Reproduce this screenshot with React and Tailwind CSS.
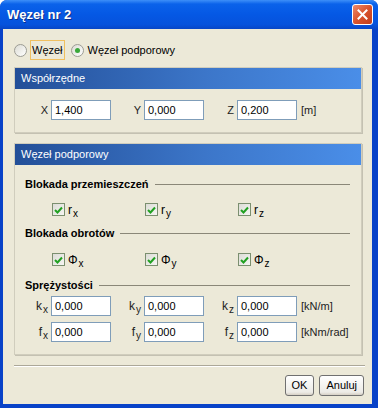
const font = { fontFamily: '"Liberation Sans", Arial, sans-serif' };

function Sub({ base, sub }) {
  return (
    <span className="inline-flex items-start leading-none h-[12px]">
      <span className="text-[12px]">{base}</span>
      <span className="text-[10px] relative top-[5px] ml-[1px]">{sub}</span>
    </span>
  );
}

function Input({ value }) {
  return (
    <div className="w-[60px] h-[20px] bg-white border border-[#7f9db9] flex items-center px-[3px] text-[11px] text-black">
      {value}
    </div>
  );
}

function Check() {
  return (
    <div className="w-[13px] h-[13px] border border-[#7b8f6f] bg-[linear-gradient(135deg,#dcdcd6,#f6f6f3)] flex items-center justify-center">
      <svg width="9" height="8" viewBox="0 0 9 8">
        <path d="M1 4 L3.5 6.5 L8 1.5" stroke="#21a121" strokeWidth="2" fill="none" />
      </svg>
    </div>
  );
}

function Panel({ title, children }) {
  return (
    <div className="mx-[11px] mr-[10px] border border-[#d0cdbd] shadow-[1px_1px_0_#c4c1b2] bg-[#ece9d8]">
      <div className="h-[21px] bg-[linear-gradient(90deg,#234f98,#3c76c9_55%,#4a8ee8)] flex items-center pl-[6px] text-white text-[11px]">
        {title}
      </div>
      {children}
    </div>
  );
}

function Section({ title, className }) {
  return (
    <div className={'flex items-center pl-[10px] pr-[11px] h-[14px] ' + className}>
      <span className="font-bold text-[11px] text-black whitespace-nowrap">{title}</span>
      <div className="flex-1 h-px bg-[#8a8778] ml-[6px]" />
    </div>
  );
}

function InputRow({ labels, values, unit, className }) {
  return (
    <div className={'flex items-center pl-[3px] h-[20px] ' + className}>
      {labels.map((l, i) => (
        <div key={i} className="w-[93px] flex items-center">
          <div className="w-[30px] flex justify-end text-[11px] text-[#222]">{l}</div>
          <div className="ml-[3px]">
            <Input value={values[i]} />
          </div>
        </div>
      ))}
      <span className="ml-[4px] text-[11px] text-[#222] whitespace-nowrap">{unit}</span>
    </div>
  );
}

function CheckRow({ base, className }) {
  return (
    <div className={'flex items-center pl-[3px] h-[13px] ' + className}>
      {['x', 'y', 'z'].map((s) => (
        <div key={s} className="w-[93px] flex items-center pl-[34px] gap-[3px]">
          <Check />
          <Sub base={base} sub={s} />
        </div>
      ))}
    </div>
  );
}

export default function App() {
  return (
    <div className="w-[378px] h-[408px] bg-white" style={font}>
      <div className="w-full h-full flex flex-col rounded-t-[7px] overflow-hidden bg-[#0842c8]">
        {/* Title bar */}
        <div className="h-[29px] shrink-0 flex items-center justify-between pl-[7px] pr-[5px] bg-[linear-gradient(180deg,#3d8ff8_0%,#0a62ea_14%,#0558e4_50%,#0652dc_85%,#0846c6_100%)]">
          <span className="text-white font-bold text-[13px] [text-shadow:1px_1px_0_#0b2f8a]">Węzeł nr 2</span>
          <div className="w-[21px] h-[21px] rounded-[3px] border border-white bg-[linear-gradient(135deg,#ee8a6c,#d9532d_50%,#c13d1c)] flex items-center justify-center">
            <svg width="11" height="11" viewBox="0 0 11 11">
              <path d="M1.5 1.5 L9.5 9.5 M9.5 1.5 L1.5 9.5" stroke="white" strokeWidth="2" strokeLinecap="square" />
            </svg>
          </div>
        </div>

        {/* Body */}
        <div className="flex-1 ml-[3px] mr-[6px] mb-[4px] bg-[#ece9d8] flex flex-col">
          <div className="h-[38px] flex items-center pl-[11px] pt-[4px] text-[11px] text-black">
            <div className="w-[13px] h-[13px] rounded-full border border-[#9c9c94] bg-[linear-gradient(135deg,#dcdcd4,#ffffff)]" />
            <span className="ml-[3px] px-[1px] py-[1px] border border-[#f0c060]">Węzeł</span>
            <div className="ml-[6px] w-[13px] h-[13px] rounded-full border border-[#9c9c94] bg-[linear-gradient(135deg,#dcdcd4,#ffffff)] flex items-center justify-center">
              <div className="w-[5px] h-[5px] rounded-full bg-[#3aa83a]" />
            </div>
            <span className="ml-[4px]">Węzeł podporowy</span>
          </div>

          <Panel title="Współrzędne">
            <InputRow
              labels={['X', 'Y', 'Z']}
              values={['1,400', '0,000', '0,200']}
              unit="[m]"
              className="mt-[11px] mb-[12px]"
            />
          </Panel>

          <div className="h-[10px]" />

          <Panel title="Węzeł podporowy">
            <Section title="Blokada przemieszczeń" className="mt-[12px]" />
            <CheckRow base="r" className="mt-[12px]" />
            <Section title="Blokada obrotów" className="mt-[10px]" />
            <CheckRow base="Φ" className="mt-[13px]" />
            <Section title="Sprężystości" className="mt-[12px]" />
            <InputRow
              labels={[<Sub base="k" sub="x" />, <Sub base="k" sub="y" />, <Sub base="k" sub="z" />]}
              values={['0,000', '0,000', '0,000']}
              unit="[kN/m]"
              className="mt-[4px]"
            />
            <InputRow
              labels={[<Sub base="f" sub="x" />, <Sub base="f" sub="y" />, <Sub base="f" sub="z" />]}
              values={['0,000', '0,000', '0,000']}
              unit="[kNm/rad]"
              className="mt-[6px] mb-[12px]"
            />
          </Panel>

          <div className="mt-[10px] ml-[11px] mr-[7px] border-t border-[#aca899] border-b border-b-white" />

          <div className="flex justify-end gap-[5px] pr-[8px] mt-[8px]">
            <div className="h-[21px] px-[6px] rounded-[3px] border border-[#707070] bg-[linear-gradient(180deg,#ffffff,#ecebe6_85%,#d6d0c5)] flex items-center text-[11px] text-black">OK</div>
            <div className="h-[21px] px-[6px] rounded-[3px] border border-[#707070] bg-[linear-gradient(180deg,#ffffff,#ecebe6_85%,#d6d0c5)] flex items-center text-[11px] text-black">Anuluj</div>
          </div>
        </div>
      </div>
    </div>
  );
}
